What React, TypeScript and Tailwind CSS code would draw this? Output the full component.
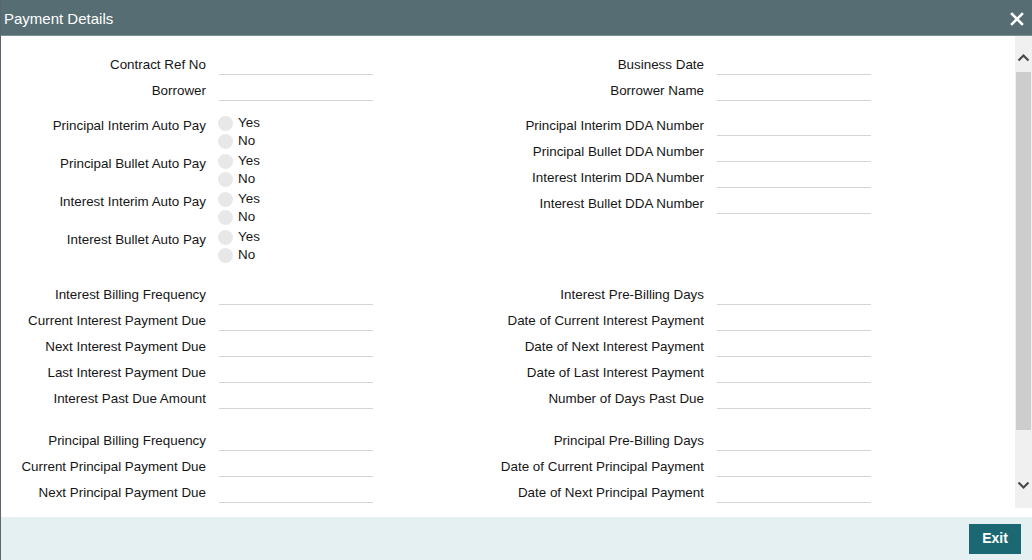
import React from "react";

type Field = { label: string };

const Input = () => (
  <div className="h-[22px] w-[154px] border-b border-[#d4d4d4]" />
);

const FieldRow = ({ label, labelW }: { label: string; labelW: string }) => (
  <div className="flex h-[26px] items-center">
    <div className={`${labelW} pt-[2px] text-right`}>{label}</div>
    <div className="ml-[13px]">
      <Input />
    </div>
  </div>
);

const Radio = ({ text }: { text: string }) => (
  <div className="flex h-[18px] items-center">
    <span className="h-[15px] w-[15px] rounded-full bg-[#e8e8e8]" />
    <span className="ml-[5px] pt-[1px]">{text}</span>
  </div>
);

const RadioGroup = ({ label }: { label: string }) => (
  <div className="flex">
    <div className="w-[205px] pt-[1px] text-right leading-[22px]">{label}</div>
    <div className="ml-[12px] flex flex-col">
      <Radio text="Yes" />
      <Radio text="No" />
    </div>
  </div>
);

const Column = ({ items, right }: { items: Field[]; right?: boolean }) => (
  <div className="flex flex-col">
    {items.map((f) => (
      <FieldRow
        key={f.label}
        label={f.label}
        labelW={right ? "w-[223px]" : "w-[205px]"}
      />
    ))}
  </div>
);

const Section = ({
  left,
  right,
  className,
}: {
  left: Field[];
  right: Field[];
  className?: string;
}) => (
  <div className={`flex ${className ?? ""}`}>
    <div className="w-[480px]">
      <Column items={left} />
    </div>
    <Column items={right} right />
  </div>
);

const f = (labels: string[]) => labels.map((label) => ({ label }));

export default function App() {
  return (
    <div
      className="flex h-[560px] w-[1032px] flex-col overflow-hidden border-l border-[#5d6670] bg-white text-[13.4px] text-[#161616]"
      style={{ fontFamily: '"Liberation Sans", Arial, sans-serif' }}
    >
      <div className="flex h-[36px] shrink-0 items-center justify-between border-b border-[#7a9094] bg-[#566e73] pl-[3px] pr-[8px] pt-[3px] text-white">
        <span className="text-[15px]">Payment Details</span>
        <svg width="14" height="14" viewBox="0 0 14 14">
          <path
            d="M2 2 L12 12 M12 2 L2 12"
            stroke="white"
            strokeWidth="2.6"
            strokeLinecap="square"
          />
        </svg>
      </div>

      <div className="flex h-[481px] shrink-0">
        <div className="flex-1 pt-[15px]">
          <div className="flex">
            <div className="w-[480px]">
              <Column items={f(["Contract Ref No", "Borrower"])} />
              <div className="mt-[11px] flex flex-col gap-[2px]">
                <RadioGroup label="Principal Interim Auto Pay" />
                <RadioGroup label="Principal Bullet Auto Pay" />
                <RadioGroup label="Interest Interim Auto Pay" />
                <RadioGroup label="Interest Bullet Auto Pay" />
              </div>
            </div>
            <div>
              <Column items={f(["Business Date", "Borrower Name"])} right />
              <div className="mt-[9px]">
                <Column
                  items={f([
                    "Principal Interim DDA Number",
                    "Principal Bullet DDA Number",
                    "Interest Interim DDA Number",
                    "Interest Bullet DDA Number",
                  ])}
                  right
                />
              </div>
            </div>
          </div>

          <Section
            className="mt-[17px]"
            left={f([
              "Interest Billing Frequency",
              "Current Interest Payment Due",
              "Next Interest Payment Due",
              "Last Interest Payment Due",
              "Interest Past Due Amount",
            ])}
            right={f([
              "Interest Pre-Billing Days",
              "Date of Current Interest Payment",
              "Date of Next Interest Payment",
              "Date of Last Interest Payment",
              "Number of Days Past Due",
            ])}
          />

          <Section
            className="mt-[16px]"
            left={f([
              "Principal Billing Frequency",
              "Current Principal Payment Due",
              "Next Principal Payment Due",
            ])}
            right={f([
              "Principal Pre-Billing Days",
              "Date of Current Principal Payment",
              "Date of Next Principal Payment",
            ])}
          />
        </div>

        <div className="flex h-[472px] w-[17px] flex-col bg-[#f0f0f0]">
          <div className="flex h-[36px] justify-center pt-[17px]">
            <svg width="13" height="9" viewBox="0 0 13 9">
              <path d="M1.5 7.5 L6.5 2.5 L11.5 7.5" fill="none" stroke="#4a4a4a" strokeWidth="2.2" />
            </svg>
          </div>
          <div className="mx-[1px] h-[358px] bg-[#cdcdcd]" />
          <div className="flex flex-1 justify-center pt-[51px]">
            <svg width="13" height="9" viewBox="0 0 13 9">
              <path d="M1.5 1.5 L6.5 6.5 L11.5 1.5" fill="none" stroke="#4a4a4a" strokeWidth="2.2" />
            </svg>
          </div>
        </div>
      </div>

      <div className="flex flex-1 items-center justify-end bg-[#e5f0f3] pr-[11px]">
        <button className="h-[30px] w-[52px] bg-[#1c6872] text-[14px] font-bold text-white">
          Exit
        </button>
      </div>
    </div>
  );
}
